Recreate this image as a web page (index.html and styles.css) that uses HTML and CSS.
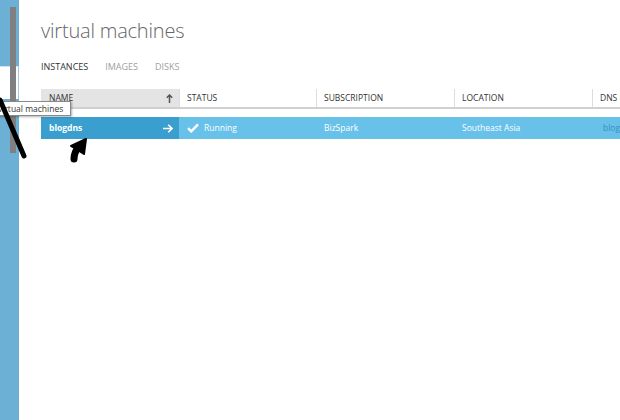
FILE: index.html
```html
<!DOCTYPE html>
<html>
<head>
<meta charset="utf-8">
<link rel="stylesheet" href="styles.css">
</head>
<body>
<div class="app">
  <aside class="sidebar">
    <div class="nav-top"></div>
    <div class="nav-selected"></div>
    <div class="nav-rest"></div>
  </aside>
  <main class="main">
    <h1 class="title">virtual machines</h1>
    <nav class="tabs">
      <span class="tab active">INSTANCES</span>
      <span class="tab">IMAGES</span>
      <span class="tab">DISKS</span>
    </nav>
    <div class="table">
      <div class="thead">
        <div class="th th-name"><span>NAME</span>
          <svg class="sort" width="7" height="9" viewBox="0 0 7 9"><path d="M3.5 1 V9 M0.8 3.8 L3.5 1 L6.2 3.8" fill="none" stroke="#555" stroke-width="1.5"/></svg>
        </div>
        <div class="th">STATUS</div>
        <div class="th">SUBSCRIPTION</div>
        <div class="th">LOCATION</div>
        <div class="th">DNS NAME</div>
      </div>
      <div class="trow">
        <div class="td td-name"><span>blogdns</span>
          <svg class="go" width="10" height="9" viewBox="0 0 10 9"><path d="M0 4.5 H9 M5.2 0.8 L9 4.5 L5.2 8.2" fill="none" stroke="#fff" stroke-width="1.6"/></svg>
        </div>
        <div class="td td-status">
          <svg class="check" width="12" height="10" viewBox="0 0 12 10"><path d="M1 5.2 L4.3 8.4 L11 1.4" fill="none" stroke="#fff" stroke-width="2.4"/></svg>
          <span>Running</span>
        </div>
        <div class="td">BizSpark</div>
        <div class="td">Southeast Asia</div>
        <div class="td td-dns">blogdns.cloudapp.net</div>
      </div>
    </div>
  </main>
</div>
<div class="scrollbar"></div>
<div class="tooltip"><span>virtual machines</span></div>
<svg class="annotations" width="620" height="420" viewBox="0 0 620 420">
  <path d="M0 100 L24 156" stroke="#000" stroke-width="5" stroke-linecap="round" fill="none"/>
  <path d="M74 159 C74 154 76 150 79 147" stroke="#000" stroke-width="7" stroke-linecap="round" fill="none"/>
  <path d="M71 146 L86 139 L84 154 Z" fill="#000" stroke="#000" stroke-width="2" stroke-linejoin="round"/>
</svg>
</body>
</html>
```
FILE: styles.css
```css
html, body {
  margin: 0;
  padding: 0;
  background: #fff;
  width: 620px;
  height: 420px;
  overflow: hidden;
  font-family: "Open Sans", "Noto Sans", sans-serif;
}
.app {
  display: flex;
  height: 420px;
}
.sidebar {
  width: 19px;
  flex: none;
  display: flex;
  flex-direction: column;
}
.nav-top {
  height: 66px;
  background: #6db0d5;
}
.nav-selected {
  height: 33px;
  background: #fff;
  border-top: 1px solid #cfe4f2;
  border-right: 1px solid #9cc8e6;
  box-sizing: border-box;
}
.nav-rest {
  flex: 1;
  background: #6db0d5;
}
.main {
  flex: 1;
  padding-left: 22px;
  min-width: 0;
}
.title {
  margin: 18px 0 0 0;
  font-size: 20px;
  line-height: 26px;
  font-weight: 300;
  color: #666;
  letter-spacing: -0.2px;
}
.tabs {
  display: flex;
  gap: 17px;
  margin-top: 16px;
  height: 14px;
  font-size: 9px;
  line-height: 14px;
}
.tab {
  color: #a0a0a0;
}
.tab.active {
  color: #333;
}
.table {
  margin-top: 15px;
}
.thead {
  display: grid;
  grid-template-columns: 138px 137px 138px 138px 138px;
  height: 18px;
  border-bottom: 2px solid #d0d0d0;
}
.th {
  font-size: 8.5px;
  line-height: 18px;
  color: #333;
  padding-left: 7px;
  border-left: 1px solid #ddd;
  white-space: nowrap;
  overflow: hidden;
}
.th-name {
  background: #e4e4e4;
  border-left: none;
  padding-left: 8px;
  display: flex;
  justify-content: space-between;
  align-items: center;
  padding-right: 6px;
}
.trow {
  margin-top: 8px;
  display: grid;
  grid-template-columns: 138px 137px 138px 138px 138px;
  height: 22px;
  background: #67c1e9;
}
.td {
  font-size: 8.5px;
  line-height: 22px;
  color: #fff;
  padding-left: 8px;
  white-space: nowrap;
  overflow: hidden;
}
.td-name {
  background: #3a9fcf;
  font-weight: 700;
  display: flex;
  justify-content: space-between;
  align-items: center;
  padding-right: 6px;
}
.td-status {
  display: flex;
  align-items: center;
  gap: 5px;
}
.td-dns {
  color: #3a8ec2;
  padding-left: 11px;
}
.scrollbar {
  position: absolute;
  left: 10px;
  top: 7px;
  width: 6px;
  height: 146px;
  background: #808080;
}
.tooltip {
  position: absolute;
  left: -10px;
  top: 101px;
  width: 81px;
  height: 15px;
  background: #fff;
  border: 1px solid #8a8a8a;
  box-shadow: 1px 1px 2px rgba(0,0,0,0.3);
  box-sizing: border-box;
  font-size: 8.5px;
  line-height: 13px;
  color: #333;
  padding-left: 7px;
  white-space: nowrap;
}
.annotations {
  position: absolute;
  left: 0;
  top: 0;
  pointer-events: none;
}
```
